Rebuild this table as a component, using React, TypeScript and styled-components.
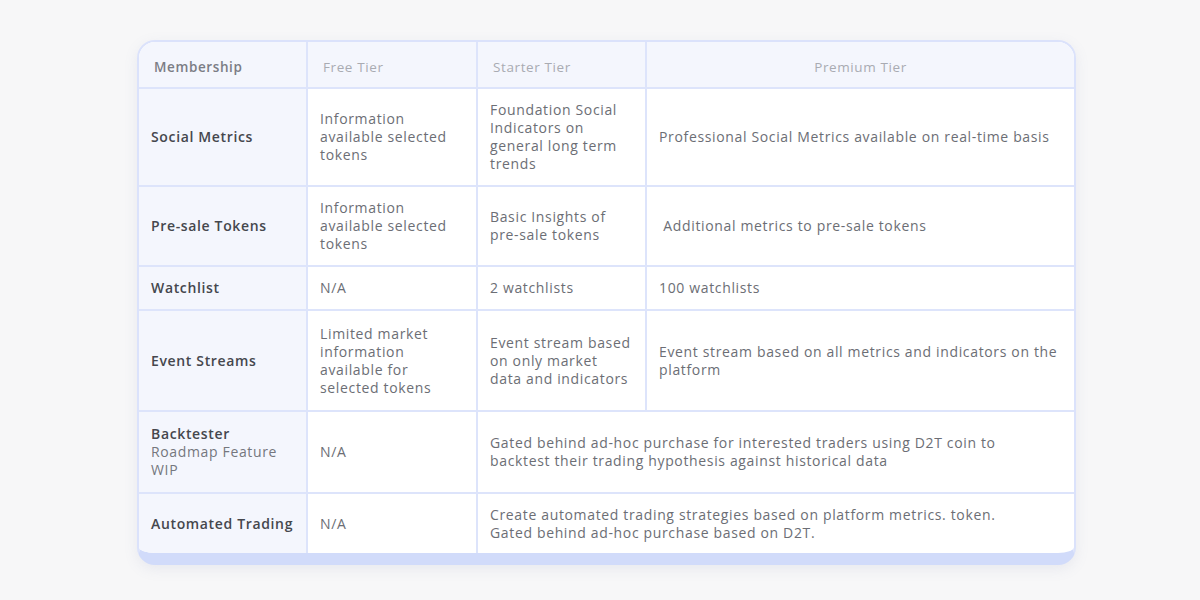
import React from "react";
import styled, { createGlobalStyle } from "styled-components";

const GlobalStyle = createGlobalStyle`
  html, body { margin: 0; padding: 0; background: #f7f7f8; }
  body { font-family: "Open Sans", "Noto Sans", sans-serif; }
`;

const Page = styled.div`
  width: 1200px;
  height: 600px;
  box-sizing: border-box;
  padding: 40px 0 0 137px;
`;

const Card = styled.div`
  width: 939px;
  box-sizing: border-box;
  border: 2px solid #dbe2fb;
  border-bottom: 12px solid #d1dbfa;
  border-radius: 18px;
  overflow: hidden;
  background: #ffffff;
  box-shadow: 0 4px 14px rgba(120, 130, 170, 0.12);
`;

const Table = styled.table`
  width: 100%;
  border-collapse: collapse;
  table-layout: fixed;
`;

const HeadCell = styled.th<{ $center?: boolean; $dark?: boolean }>`
  height: 46px;
  box-sizing: border-box;
  background: #f4f6fd;
  padding: 5px 14px 0 ${(p) => (p.$center ? "14px" : "15px")};
  text-align: ${(p) => (p.$center ? "center" : "left")};
  font-size: 13.5px;
  letter-spacing: 0.6px;
  font-weight: ${(p) => (p.$dark ? 600 : 400)};
  color: ${(p) => (p.$dark ? "#7b7d85" : "#a9abb2")};
  border-left: 2px solid #dde4fb;
  border-bottom: 2px solid #dde4fb;
  &:first-child { border-left: none; }
`;

const Row = styled.tr<{ $h: number }>`
  height: ${(p) => p.$h}px;
`;

const Label = styled.th`
  background: #f4f6fd;
  text-align: left;
  padding: 0 4px 0 12px;
  font-size: 14px;
  letter-spacing: 0.65px;
  font-weight: 600;
  color: #45474d;
  line-height: 18px;
  border-top: 2px solid #dde4fb;
  white-space: pre-line;
`;

const Sub = styled.span`
  display: block;
  font-weight: 400;
  color: #75777e;
`;

const Cell = styled.td`
  padding: 0 4px 0 12px;
  font-size: 14px;
  letter-spacing: 0.65px;
  line-height: 18px;
  color: #6c6e75;
  border-left: 2px solid #dde4fb;
  border-top: 2px solid #dde4fb;
  white-space: pre-line;
`;

type Line = { label: React.ReactNode; cells: string[]; spans?: number[]; h: number };

const rows: Line[] = [
  {
    label: "Social Metrics",
    h: 98,
    cells: [
      "Information\navailable selected\ntokens",
      "Foundation Social\nIndicators on\ngeneral long term\ntrends",
      "Professional Social Metrics available on real-time basis",
    ],
  },
  {
    label: "Pre-sale Tokens",
    h: 80,
    cells: [
      "Information\navailable selected\ntokens",
      "Basic Insights of\npre-sale tokens",
      "\u00a0Additional metrics to pre-sale tokens",
    ],
  },
  { label: "Watchlist", h: 44, cells: ["N/A", "2 watchlists", "100 watchlists"] },
  {
    label: "Event Streams",
    h: 101,
    cells: [
      "Limited market\ninformation\navailable for\nselected tokens",
      "Event stream based\non only market\ndata and indicators",
      "Event stream based on all metrics and indicators on the\nplatform",
    ],
  },
  {
    label: (
      <>
        Backtester
        <Sub>{"Roadmap Feature\nWIP"}</Sub>
      </>
    ),
    h: 82,
    cells: [
      "N/A",
      "Gated behind ad-hoc purchase for interested traders using D2T coin to\nbacktest their trading hypothesis against historical data",
    ],
    spans: [1, 2],
  },
  {
    label: "Automated Trading",
    h: 60,
    cells: [
      "N/A",
      "Create automated trading strategies based on platform metrics. token.\nGated behind ad-hoc purchase based on D2T.",
    ],
    spans: [1, 2],
  },
];

export default function App() {
  return (
    <>
      <GlobalStyle />
      <Page>
        <Card>
          <Table>
            <colgroup>
              <col style={{ width: 168 }} />
              <col style={{ width: 170 }} />
              <col style={{ width: 169 }} />
              <col />
            </colgroup>
            <thead>
              <tr>
                <HeadCell $dark>Membership</HeadCell>
                <HeadCell>Free Tier</HeadCell>
                <HeadCell>Starter Tier</HeadCell>
                <HeadCell $center>Premium Tier</HeadCell>
              </tr>
            </thead>
            <tbody>
              {rows.map((r, i) => (
                <Row key={i} $h={r.h}>
                  <Label>{r.label}</Label>
                  {r.cells.map((c, j) => (
                    <Cell key={j} colSpan={r.spans ? r.spans[j] : 1}>
                      {c}
                    </Cell>
                  ))}
                </Row>
              ))}
            </tbody>
          </Table>
        </Card>
      </Page>
    </>
  );
}
